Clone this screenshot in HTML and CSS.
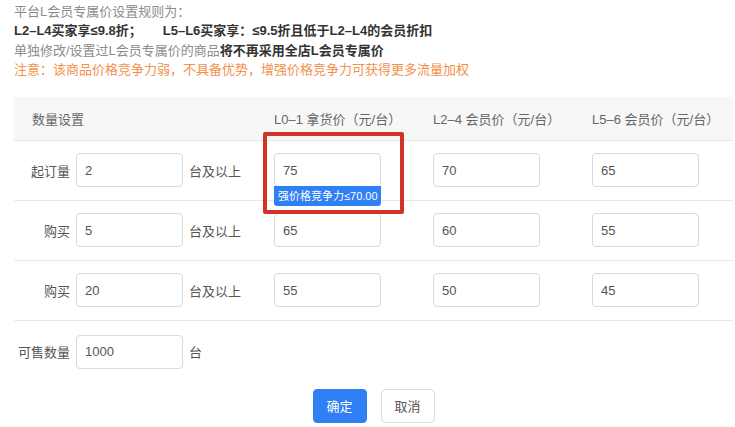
FILE: index.html
```html
<!DOCTYPE html>
<html lang="zh-CN">
<head>
<meta charset="utf-8">
<title>L会员专属价设置</title>
<link rel="stylesheet" href="styles.css">
</head>
<body>
<div class="page">
  <div class="notes">
    <p class="muted">平台L会员专属价设置规则为：</p>
    <p class="strong">L2–L4买家享≤9.8折；<span class="gap">L5–L6买家享：≤9.5折且低于L2–L4的会员折扣</span></p>
    <p class="muted">单独修改/设置过L会员专属价的商品<b class="strong">将不再采用全店L会员专属价</b></p>
    <p class="warn">注意：该商品价格竞争力弱，不具备优势，增强价格竞争力可获得更多流量加权</p>
  </div>

  <div class="table">
    <div class="row head">
      <div class="cell qty-head">数量设置</div>
      <div class="cell">L0–1 拿货价（元/台）</div>
      <div class="cell">L2–4 会员价（元/台）</div>
      <div class="cell">L5–6 会员价（元/台）</div>
    </div>

    <div class="row">
      <div class="cell qty"><span class="label">起订量</span><input class="input" type="text" value="2"><span class="unit">台及以上</span></div>
      <div class="cell">
        <div class="field">
          <input class="input" type="text" value="75">
          <span class="tip">强价格竞争力≤70.00</span>
          <span class="mark"></span>
        </div>
      </div>
      <div class="cell"><input class="input" type="text" value="70"></div>
      <div class="cell"><input class="input" type="text" value="65"></div>
    </div>

    <div class="row">
      <div class="cell qty"><span class="label">购买</span><input class="input" type="text" value="5"><span class="unit">台及以上</span></div>
      <div class="cell"><input class="input" type="text" value="65"></div>
      <div class="cell"><input class="input" type="text" value="60"></div>
      <div class="cell"><input class="input" type="text" value="55"></div>
    </div>

    <div class="row">
      <div class="cell qty"><span class="label">购买</span><input class="input" type="text" value="20"><span class="unit">台及以上</span></div>
      <div class="cell"><input class="input" type="text" value="55"></div>
      <div class="cell"><input class="input" type="text" value="50"></div>
      <div class="cell"><input class="input" type="text" value="45"></div>
    </div>

    <div class="stock">
      <span class="label">可售数量</span><input class="input" type="text" value="1000"><span class="unit">台</span>
    </div>
  </div>

  <div class="actions">
    <button class="btn primary" type="button">确定</button>
    <button class="btn" type="button">取消</button>
  </div>
</div>
</body>
</html>
```

FILE: styles.css
```css
* { box-sizing: border-box; }

html, body {
  margin: 0;
  padding: 0;
  background: #ffffff;
}

body {
  font-family: "Liberation Sans", "Noto Sans CJK SC", sans-serif;
  font-size: 13px;
  color: #666666;
  text-spacing-trim: space-all;
}

.page {
  width: 735px;
  padding: 2px 2px 0 14px;
}

.notes p {
  margin: 0;
  line-height: 19.4px;
  white-space: nowrap;
}

.muted { color: #8c8c8c; }

.strong {
  color: #333333;
  font-weight: bold;
}

.gap { margin-left: 21px; }

.warn { color: #f2914a; }

.table {
  margin-top: 17px;
}

.row {
  display: grid;
  grid-template-columns: 260px 159px 159px 1fr;
  align-items: center;
  height: 60px;
  border-bottom: 1px solid #e9e9e9;
}

.row.head {
  height: 44px;
  background: #f7f7f7;
  border-bottom: 1px solid #e6e6e6;
  color: #666666;
}

.qty-head { padding-left: 18px; }

.cell {
  display: flex;
  align-items: center;
}

.label {
  display: inline-block;
  width: 56px;
  text-align: right;
  color: #555555;
}

.unit {
  margin-left: 6px;
  color: #555555;
}

.qty .input,
.stock .input { margin-left: 6px; }

.input {
  width: 107px;
  height: 34px;
  padding: 0 8px;
  border: 1px solid #d9d9d9;
  border-radius: 4px;
  background: #ffffff;
  font-family: inherit;
  font-size: 13px;
  color: #555555;
  outline: none;
}

.field {
  position: relative;
  width: 107px;
  height: 34px;
}

.tip {
  position: absolute;
  left: 0;
  top: 33px;
  width: 107px;
  height: 20px;
  line-height: 20px;
  padding-left: 4px;
  background: #2f7ff5;
  color: #ffffff;
  font-size: 11px;
  border-radius: 0 0 3px 3px;
  white-space: nowrap;
  overflow: hidden;
}

.mark {
  position: absolute;
  left: -11px;
  top: -21px;
  width: 141px;
  height: 82px;
  border: 4px solid #cf3427;
  border-radius: 2px;
}

.stock {
  display: flex;
  align-items: center;
  height: 48px;
  padding-top: 14px;
}

.actions {
  display: flex;
  justify-content: center;
  gap: 14px;
  margin-top: 20px;
}

.btn {
  width: 54px;
  height: 34px;
  border: 1px solid #dddddd;
  border-radius: 4px;
  background: #ffffff;
  color: #555555;
  font-family: inherit;
  font-size: 13px;
  padding: 0;
}

.btn.primary {
  background: #2f7ff5;
  border-color: #2f7ff5;
  color: #ffffff;
}
```
